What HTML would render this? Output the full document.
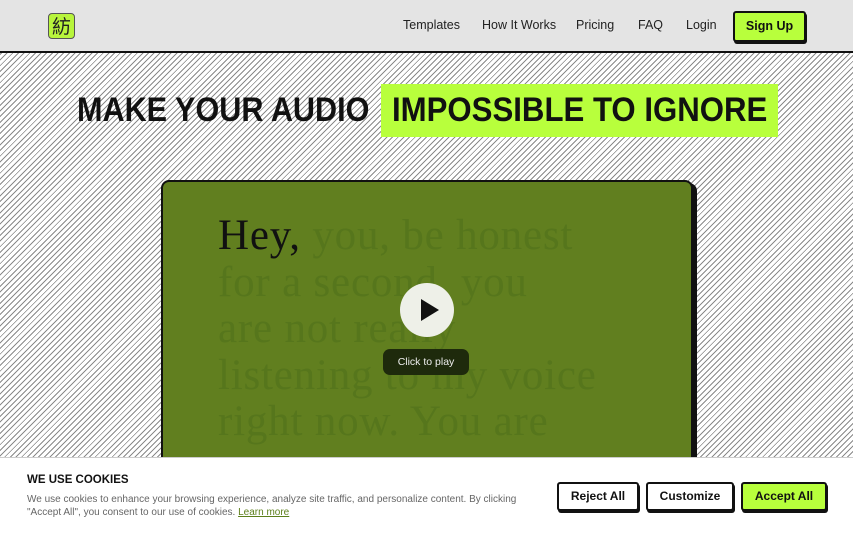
<!DOCTYPE html>
<html><head><meta charset="utf-8"><style>
*{margin:0;padding:0;box-sizing:border-box}
body{width:853px;height:533px;overflow:hidden;position:relative;font-family:"Liberation Sans",sans-serif;
background:repeating-linear-gradient(135deg,#fff 0 2px,#8a8a8a 2px 3px,#fff 3px 4px);}
header{position:absolute;left:0;top:0;width:853px;height:53px;background:#e4e4e4;border-bottom:2px solid #111}
.logo{position:absolute;left:48px;top:13px;width:27px;height:26px;background:#b8f53c;border:1px solid #555;border-radius:4px;font-family:"Noto Sans CJK SC",sans-serif;font-size:19px;line-height:23px;text-align:center;color:#222}
nav a{position:absolute;top:18px;font-size:12.5px;color:#222;text-decoration:none}
.su{position:absolute;left:733px;top:11px;width:73px;height:31px;background:#b8ff3c;border:2px solid #111;border-radius:3px;box-shadow:1px 2px 0 #111;font-weight:bold;font-size:12.5px;text-align:center;line-height:27px;color:#111}
h1{position:absolute;left:77px;top:91px;font-size:34px;font-weight:bold;color:#111;transform:scaleX(0.9);transform-origin:0 0;white-space:nowrap}
.hl{position:absolute;left:381px;top:84px;width:397px;height:53px;background:#b8ff3c}
.hlt{position:absolute;left:392px;top:91px;font-size:34px;font-weight:bold;color:#111;white-space:nowrap;transform:scaleX(0.917);transform-origin:0 0}
.card{position:absolute;left:161px;top:180px;width:532px;height:300px;background:#617f1f;border:2px solid #111;border-radius:8px;box-shadow:4px 3px 0 #111;overflow:hidden}
.txt{position:absolute;left:55px;top:31px;font-family:"Liberation Serif",serif;font-size:43px;line-height:46.5px;letter-spacing:0.8px;color:#56761c;white-space:nowrap}
.txt b{font-weight:normal;color:#111}
.play{position:absolute;left:400px;top:283px;width:54px;height:54px;border-radius:50%;background:#eef0e8}
.play:after{content:"";position:absolute;left:21px;top:16px;border-left:18px solid #111;border-top:11px solid transparent;border-bottom:11px solid transparent}
.pill{position:absolute;left:383px;top:349px;width:86px;height:26px;border-radius:7px;background:#1e2a0c;color:#eee;font-size:10.5px;text-align:center;line-height:26px}
.ck{position:absolute;left:0;top:457px;width:853px;height:76px;background:#fff;border-top:1px solid #ccc}
.ck h3{position:absolute;left:27px;top:16px;font-size:11.5px;color:#111}
.ck p{position:absolute;left:27px;top:35px;width:510px;font-size:10px;line-height:13px;color:#666}
.ck p a{color:#5c7f1a;text-decoration:underline}
.btn{position:absolute;top:24px;height:29px;border:2px solid #111;border-radius:3px;box-shadow:1px 2px 0 #111;background:#fff;font-weight:bold;font-size:12px;text-align:center;line-height:25px;color:#111}
</style></head><body>
<header>
<div class="logo">紡</div>
<nav><a style="left:403px">Templates</a><a style="left:482px">How It Works</a><a style="left:576px">Pricing</a><a style="left:638px">FAQ</a><a style="left:686px">Login</a></nav>
<div class="su">Sign Up</div>
</header>
<h1>MAKE YOUR AUDIO</h1>
<div class="hl"></div><div class="hlt">IMPOSSIBLE TO IGNORE</div>
<div class="card"><div class="txt"><b>Hey,</b> you, be honest<br>for a second, you<br>are not really<br>listening to my voice<br>right now. You are</div></div>
<div class="play"></div>
<div class="pill">Click to play</div>
<div class="ck">
<h3>WE USE COOKIES</h3>
<p>We use cookies to enhance your browsing experience, analyze site traffic, and personalize content. By clicking "Accept All", you consent to our use of cookies. <a>Learn more</a></p>
<div class="btn" style="left:557px;width:82px">Reject All</div>
<div class="btn" style="left:646px;width:88px">Customize</div>
<div class="btn" style="left:741px;width:86px;background:#b8ff3c">Accept All</div>
</div>
</body></html>
